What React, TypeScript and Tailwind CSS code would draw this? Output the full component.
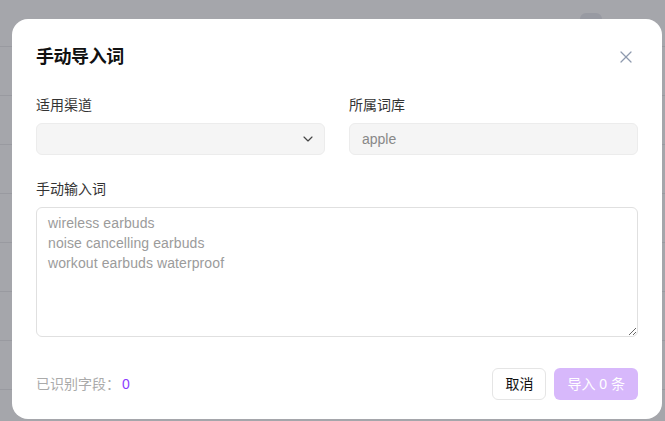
import { X, ChevronDown } from 'lucide-react';

const ROWS = [0, 1, 2, 3, 4, 5, 6, 7];

export default function App() {
  return (
    <div
      className="relative w-[665px] h-[421px] overflow-hidden bg-[#a5a6ab]"
      style={{ fontFamily: '"Liberation Sans", "Noto Sans CJK SC", sans-serif' }}
    >
      {/* Page behind the overlay */}
      <div className="flex flex-col">
        <div className="h-[47px] border-b border-[#999aa0] flex justify-end items-start pr-[63px] pt-[13px]">
          <div className="w-[22px] h-[12px] rounded-md bg-[#989aa2]" />
        </div>
        {ROWS.map(i => (
          <div key={i} className="h-[49px] border-b border-[#999aa0]" />
        ))}
      </div>

      {/* Dialog */}
      <div className="absolute left-[12px] top-[19px] w-[650px] h-[400px] bg-white rounded-2xl px-6 pt-6 flex flex-col">
        <div className="flex items-center justify-between h-7">
          <h2 className="text-lg font-semibold text-[#111] tracking-tight">手动导入词</h2>
          <button className="mr-0.5 text-[#8e9aae]">
            <X size={20} strokeWidth={1.5} />
          </button>
        </div>

        <div className="grid grid-cols-2 gap-6 mt-6">
          <div>
            <label className="block text-sm leading-5 text-[#333]">适用渠道</label>
            <div className="mt-2 h-8 rounded-md border border-[#ececec] bg-[#f5f5f5] flex items-center justify-end pr-2">
              <ChevronDown size={16} strokeWidth={1.75} className="text-[#444]" />
            </div>
          </div>
          <div>
            <label className="block text-sm leading-5 text-[#333]">所属词库</label>
            <div className="mt-2 h-8 rounded-md border border-[#ececec] bg-[#f5f5f5] flex items-center px-3 text-sm text-[#888]">
              apple
            </div>
          </div>
        </div>

        <label className="block mt-6 text-sm leading-5 text-[#333]">手动输入词</label>
        <textarea
          className="mt-2 h-[130px] w-full rounded-md border border-[#e0e0e0] px-[11px] pt-[5px] text-sm leading-5 tracking-[0.1px] outline-none resize-y placeholder:text-[#9b9b9b]"
          placeholder={'wireless earbuds\nnoise cancelling earbuds\nworkout earbuds waterproof'}
        />

        <div className="mt-[31px] flex items-center justify-between">
          <div className="text-sm text-[#aaa]">
            已识别字段：<span className="ml-0.5 text-[#8b3dff]">0</span>
          </div>
          <div className="flex gap-2">
            <button className="h-8 px-3 rounded-md border border-[#e5e5e5] bg-white text-sm text-[#111]">
              取消
            </button>
            <button className="h-8 px-3 rounded-md border border-transparent bg-[#d7b8fb] text-sm text-white">
              导入 0 条
            </button>
          </div>
        </div>
      </div>
    </div>
  );
}
